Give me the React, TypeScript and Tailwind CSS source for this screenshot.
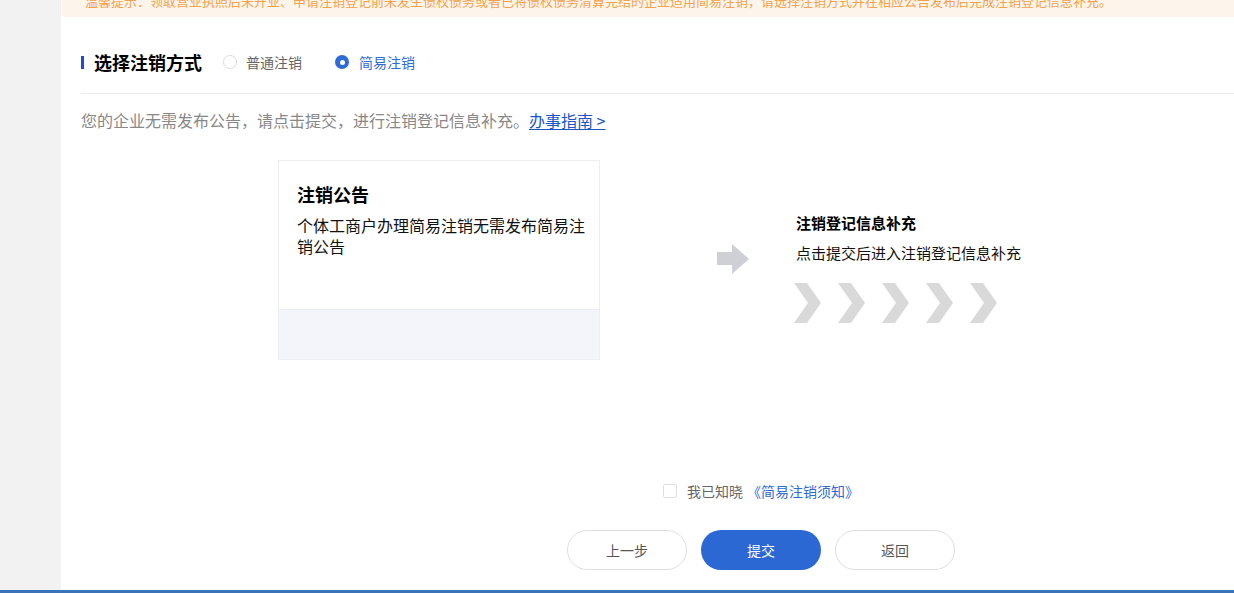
import React from "react";

const FONT = { fontFamily: '"Microsoft YaHei", "Noto Sans CJK SC", sans-serif' };

function Chevron() {
  return (
    <svg width="27" height="40" viewBox="0 0 27 40">
      <polygon points="0,0 13,0 27,20 13,40 0,40 14,20" fill="#d9d9d9" />
    </svg>
  );
}

function GrayArrow() {
  return (
    <svg width="32" height="31" viewBox="0 0 32 31">
      <rect x="0" y="8" width="16" height="13" fill="#cfd0d6" />
      <polygon points="15,0 32,15 15,30" fill="#cfd0d6" />
    </svg>
  );
}

export default function App() {
  return (
    <div className="w-[1234px] h-[593px] overflow-hidden flex flex-col bg-white" style={FONT}>
      <div className="flex flex-1 min-h-0">
        {/* left rail */}
        <div className="w-[61px] shrink-0 bg-[#f2f2f2]" />

        <div className="flex-1 flex flex-col min-w-0">
          {/* notice banner, scrolled partly out of view */}
          <div className="h-[17px] ml-px bg-[#fdf5eb] rounded-bl-[4px] overflow-hidden pl-[23px]">
            <p className="-mt-[9px] leading-[20px] text-[13px] text-[#f2a24c] whitespace-nowrap">
              温馨提示：领取营业执照后未开业、申请注销登记前未发生债权债务或者已将债权债务清算完结的企业适用简易注销，请选择注销方式并在相应公告发布后完成注销登记信息补充。
            </p>
          </div>

          <div className="pl-[20px] flex flex-col">
            {/* heading */}
            <div className="mt-[31px] h-[28px] flex items-center">
              <span className="w-[3px] h-[13px] bg-[#1d4fc8]" />
              <h2 className="ml-[10px] text-[18px] font-bold text-black leading-[28px]">选择注销方式</h2>
              <label className="ml-[21px] flex items-center">
                <span className="w-[14px] h-[14px] rounded-full border border-[#d9dce3] bg-white" />
                <span className="ml-[9px] text-[14px] text-[#666]">普通注销</span>
              </label>
              <label className="ml-[33px] flex items-center">
                <span className="w-[14px] h-[14px] rounded-full bg-[#2f6bd6] flex items-center justify-center">
                  <span className="w-[5px] h-[5px] rounded-full bg-white" />
                </span>
                <span className="ml-[10px] text-[14px] text-[#2f6bd6]">简易注销</span>
              </label>
            </div>

            <div className="mt-[17px] h-px bg-[#ebebeb]" />

            <p className="mt-[14px] leading-[24px] text-[16px] text-[#888]">
              您的企业无需发布公告，请点击提交，进行注销登记信息补充。
              <a className="text-[#1a56c8] underline underline-offset-2">办事指南 &gt;</a>
            </p>

            {/* flow */}
            <div className="mt-[28px] flex items-start">
              <div className="ml-[197px] w-[322px] h-[200px] border border-[#eceef2] flex flex-col">
                <div className="flex-1 pl-[18px] pr-[12px] pt-[20px]">
                  <h3 className="text-[18px] font-bold text-black leading-[26px]">注销公告</h3>
                  <p className="mt-[8px] text-[16px] text-[#111] leading-[21px]">
                    个体工商户办理简易注销无需发布简易注销公告
                  </p>
                </div>
                <div className="h-[50px] bg-[#f3f5fa] border-t border-[#eceef2]" />
              </div>

              <div className="ml-[117px] mt-[84px]">
                <GrayArrow />
              </div>

              <div className="ml-[47px] mt-[53px] flex flex-col">
                <h4 className="text-[15px] font-bold text-black leading-[20px]">注销登记信息补充</h4>
                <p className="mt-[10px] text-[15px] text-[#111] leading-[20px]">点击提交后进入注销登记信息补充</p>
                <div className="mt-[20px] -ml-[2px] flex gap-[17px]">
                  <Chevron />
                  <Chevron />
                  <Chevron />
                  <Chevron />
                  <Chevron />
                </div>
              </div>
            </div>

            {/* agreement */}
            <div className="mt-[121px] ml-[582px] h-[20px] flex items-center text-[14px]">
              <span className="w-[14px] h-[14px] border border-[#dcdfe6] rounded-[2px] bg-white" />
              <span className="ml-[10px] text-[#666]">我已知晓</span>
              <span className="ml-[4px] text-[#2f6bd6]">《简易注销须知》</span>
            </div>

            {/* actions */}
            <div className="mt-[29px] ml-[486px] flex gap-[14px]">
              <button className="w-[120px] h-[40px] rounded-full border border-[#dcdfe6] bg-white text-[14px] text-[#555]">
                上一步
              </button>
              <button className="w-[120px] h-[40px] rounded-full bg-[#2c68d4] text-[14px] text-white">
                提交
              </button>
              <button className="w-[120px] h-[40px] rounded-full border border-[#dcdfe6] bg-white text-[14px] text-[#555]">
                返回
              </button>
            </div>
          </div>
        </div>
      </div>

      <div className="h-[3px] shrink-0 bg-[#3b73b9]" />
    </div>
  );
}
